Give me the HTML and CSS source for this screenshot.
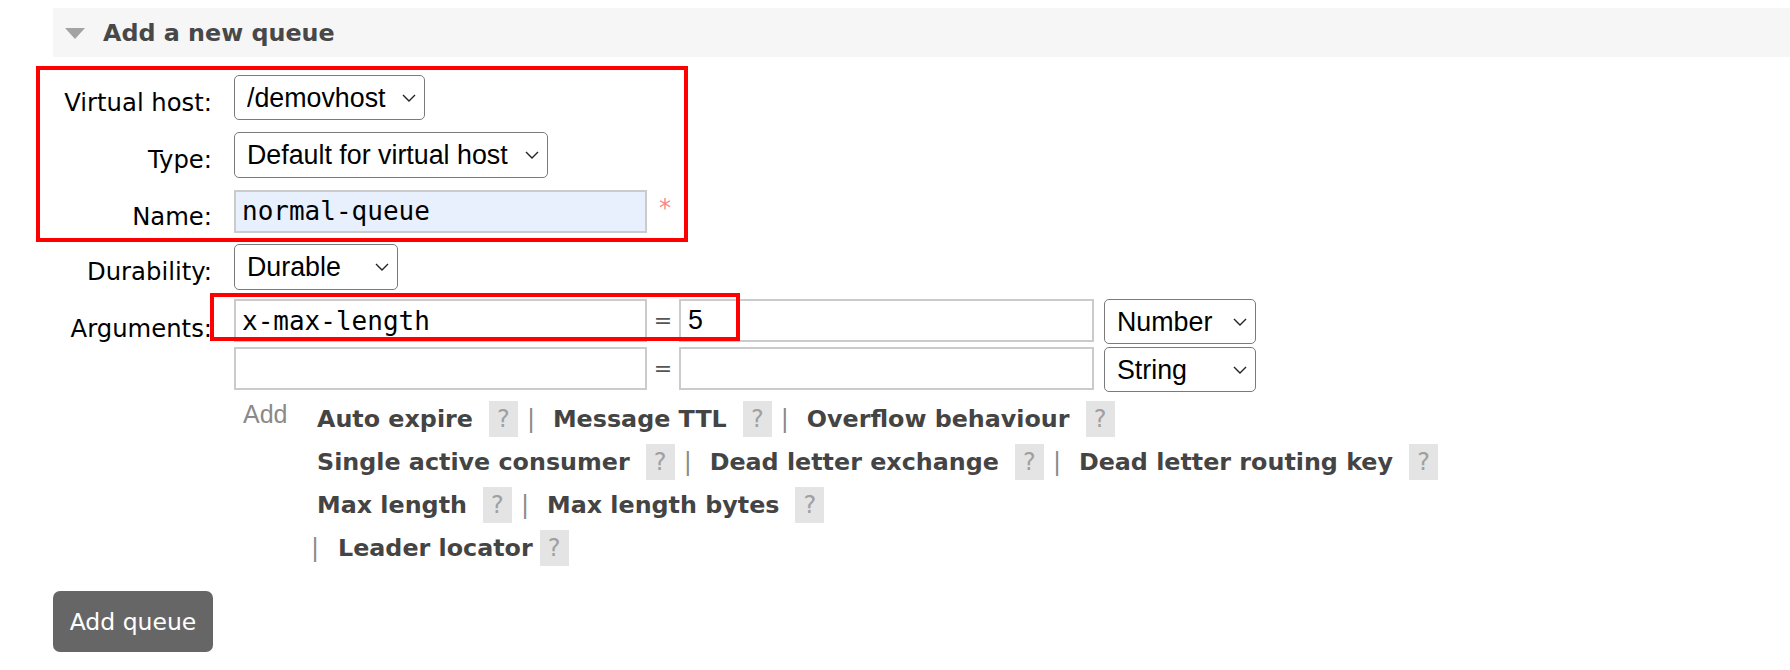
FILE: index.html
```html
<!DOCTYPE html>
<html lang="en">
<head>
<meta charset="utf-8">
<title>Add a new queue</title>
<link rel="stylesheet" href="styles.css">
</head>
<body>
<div class="section">
  <h2 class="section-head"><span class="tri"></span>Add a new queue</h2>
  <form class="form">
    <div class="grid">
      <label class="lbl">Virtual host:</label>
      <div class="ctl">
        <div class="sel w-vhost"><select><option>/demovhost</option></select><svg class="chev" viewBox="0 0 14 8"><path d="M1 1 L7 7 L13 1"/></svg></div>
      </div>

      <label class="lbl">Type:</label>
      <div class="ctl">
        <div class="sel w-type"><select><option>Default for virtual host</option></select><svg class="chev" viewBox="0 0 14 8"><path d="M1 1 L7 7 L13 1"/></svg></div>
      </div>

      <label class="lbl">Name:</label>
      <div class="ctl">
        <input class="inp mono name-inp" type="text" value="normal-queue"><span class="mand">*</span>
      </div>

      <label class="lbl">Durability:</label>
      <div class="ctl">
        <div class="sel w-dur"><select><option>Durable</option></select><svg class="chev" viewBox="0 0 14 8"><path d="M1 1 L7 7 L13 1"/></svg></div>
      </div>

      <label class="lbl lbl-args">Arguments:</label>
      <div class="args">
        <div class="multi">
          <input class="inp mono key-inp" type="text" value="x-max-length">
          <span class="eq">=</span>
          <input class="inp sans val-inp" type="text" value="5">
          <div class="sel w-kind"><select><option>Number</option></select><svg class="chev" viewBox="0 0 14 8"><path d="M1 1 L7 7 L13 1"/></svg></div>
        </div>
        <div class="multi">
          <input class="inp mono key-inp" type="text" value="">
          <span class="eq">=</span>
          <input class="inp sans val-inp" type="text" value="">
          <div class="sel w-kind"><select><option>String</option></select><svg class="chev" viewBox="0 0 14 8"><path d="M1 1 L7 7 L13 1"/></svg></div>
        </div>
        <div class="add-area">
          <span class="add-lbl">Add</span>
          <div class="links">
            <div class="lrow">
              <span class="alink">Auto expire</span><span class="help">?</span><span class="pipe">|</span>
              <span class="alink after-pipe">Message TTL</span><span class="help">?</span><span class="pipe">|</span>
              <span class="alink after-pipe">Overflow behaviour</span><span class="help">?</span>
            </div>
            <div class="lrow">
              <span class="alink">Single active consumer</span><span class="help">?</span><span class="pipe">|</span>
              <span class="alink after-pipe">Dead letter exchange</span><span class="help">?</span><span class="pipe">|</span>
              <span class="alink after-pipe">Dead letter routing key</span><span class="help">?</span>
            </div>
            <div class="lrow">
              <span class="alink">Max length</span><span class="help">?</span><span class="pipe">|</span>
              <span class="alink after-pipe">Max length bytes</span><span class="help">?</span>
            </div>
            <div class="lrow lrow-last">
              <span class="pipe first-pipe">|</span>
              <span class="alink after-pipe2">Leader locator</span><span class="help help-tight">?</span>
            </div>
          </div>
        </div>
      </div>
    </div>
    <div class="annot annot-top"></div>
    <div class="annot annot-args"></div>
  </form>
  <button class="btn" type="button">Add queue</button>
</div>
</body>
</html>
```

FILE: styles.css
```css
* { box-sizing: border-box; }
html, body { margin: 0; padding: 0; background: #fff; }
body {
  font-family: "DejaVu Sans", Verdana, sans-serif;
  font-size: 24px;
  color: #000;
}

.section { padding-top: 8px; }

.section-head {
  margin: 0 0 0 53px;
  height: 49px;
  background: #f6f6f6;
  display: flex;
  align-items: center;
  padding-left: 12px;
  font-size: 23.8px;
  font-weight: bold;
  color: #484848;
}
.tri {
  width: 0; height: 0;
  border-left: 10.5px solid transparent;
  border-right: 10.5px solid transparent;
  border-top: 11px solid #a3a3a3;
  margin-right: 18px;
  margin-top: 2px;
}

.form {
  position: relative;
  margin-top: 12px;
}
.grid {
  display: grid;
  grid-template-columns: 212px 1fr;
  grid-template-rows: 57px 57px 56px 55px auto;
  column-gap: 22px;
}
.lbl {
  text-align: right;
  align-self: center;
  line-height: 28px;
  padding-top: 11px;
  font-size: 24.3px;
  white-space: nowrap;
}
.lbl-args { align-self: start; padding-top: 21px; }
.ctl { display: flex; align-items: center; }

/* selects */
.sel { position: relative; display: inline-block; height: 45px; }
.sel select {
  appearance: none;
  -webkit-appearance: none;
  height: 45px;
  width: 100%;
  border: 1.5px solid #7a7a7a;
  border-radius: 5px;
  background: #fff;
  font-family: "Liberation Sans", Arial, sans-serif;
  font-size: 26.8px;
  color: #000;
  padding: 0 30px 0 12px;
  margin: 0;
}
.chev {
  position: absolute;
  right: 9px;
  top: 19px;
  width: 14px;
  height: 8px;
  fill: none;
  stroke: #222;
  stroke-width: 1.4;
  pointer-events: none;
}
.w-vhost { width: 191px; }
.w-type { width: 314px; height: 46px; }
.w-type select { height: 46px; }
.w-dur { width: 164px; height: 46px; }
.w-dur select { height: 46px; }
.w-kind { width: 152px; margin-left: 10px; }

/* inputs */
.inp {
  height: 43px;
  border: 2px solid #cbcbcb;
  background: #fff;
  margin: 0;
  color: #000;
  outline: none;
}
.mono {
  font-family: "DejaVu Sans Mono", Menlo, monospace;
  font-size: 26px;
  padding: 0 6px;
}
.sans {
  font-family: "Liberation Sans", Arial, sans-serif;
  font-size: 26.8px;
  padding: 0 7px;
}
.name-inp { width: 413px; background: #e8f0fe; }
.mand {
  color: #f78a8a;
  margin-left: 12px;
  margin-top: -6px;
  font-size: 24px;
}

/* arguments */
.args { padding-top: 5px; }
.multi {
  display: flex;
  align-items: flex-start;
  margin-bottom: 3px;
}
.key-inp { width: 413px; }
.val-inp { width: 415px; }
.eq {
  width: 32px;
  text-align: center;
  line-height: 43px;
  color: #555;
  font-size: 22px;
}

.add-area {
  display: flex;
  align-items: flex-start;
  margin-top: 5px;
}
.add-lbl {
  font-family: "Liberation Sans", Arial, sans-serif;
  font-size: 25px;
  color: #8a8a8a;
  margin-left: 9px;
  width: 74px;
  line-height: 28px;
  padding-top: 3px;
}
.links { display: flex; flex-direction: column; }
.lrow {
  display: flex;
  align-items: center;
  height: 43px;
  white-space: nowrap;
}
.alink {
  font-weight: bold;
  font-size: 23.8px;
  color: #444;
}
.help {
  display: inline-flex;
  align-items: center;
  justify-content: center;
  width: 29px;
  height: 36px;
  background: #e4e4e4;
  color: #a0a0a0;
  font-size: 24px;
  margin-left: 16px;
}
.help-tight { margin-left: 7px; }
.pipe {
  width: 8px;
  text-align: center;
  color: #8a8a8a;
  margin-left: 9px;
  font-size: 24px;
}
.after-pipe { margin-left: 18px; }
.first-pipe { margin-left: -6px; }
.after-pipe2 { margin-left: 19px; }

/* annotation overlays */
.annot {
  position: absolute;
  border: 4px solid #ff0000;
  pointer-events: none;
}
.annot-top { left: 36px; top: -3px; width: 652px; height: 176px; }
.annot-args { left: 210px; top: 224px; width: 530px; height: 48px; }

.btn {
  display: block;
  margin: 22px 0 0 53px;
  width: 160px;
  height: 61px;
  border: 0;
  border-radius: 7px;
  background: #666;
  color: #fff;
  font-family: "DejaVu Sans", Verdana, sans-serif;
  font-size: 23.5px;
  padding: 0;
}
```
